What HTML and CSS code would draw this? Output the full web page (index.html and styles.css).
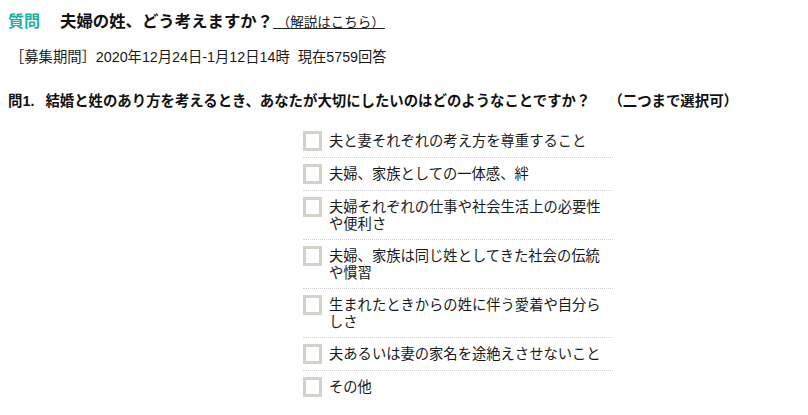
FILE: index.html
```html
<!DOCTYPE html>
<html lang="ja">
<head>
<meta charset="utf-8">
<title>夫婦の姓</title>
<link rel="stylesheet" href="styles.css">
</head>
<body>
<div class="page">
  <div class="header">
    <span class="label">質問</span>
    <span class="title">夫婦の姓、どう考えますか？</span>
    <a class="note" href="#"> （解説はこちら）</a>
  </div>
  <p class="period">［募集期間］2020年12月24日-1月12日14時&nbsp;&nbsp;現在5759回答</p>
  <p class="question"><span class="qno">問1.</span>結婚と姓のあり方を考えるとき、あなたが大切にしたいのはどのようなことですか？<span class="limit">（二つまで選択可）</span></p>
  <ul class="choices">
    <li class="choice"><span class="box"></span><span class="text">夫と妻それぞれの考え方を尊重すること</span></li>
    <li class="choice"><span class="box"></span><span class="text">夫婦、家族としての一体感、絆</span></li>
    <li class="choice"><span class="box"></span><span class="text">夫婦それぞれの仕事や社会生活上の必要性や便利さ</span></li>
    <li class="choice"><span class="box"></span><span class="text">夫婦、家族は同じ姓としてきた社会の伝統や慣習</span></li>
    <li class="choice"><span class="box"></span><span class="text">生まれたときからの姓に伴う愛着や自分らしさ</span></li>
    <li class="choice"><span class="box"></span><span class="text">夫あるいは妻の家名を途絶えさせないこと</span></li>
    <li class="choice"><span class="box"></span><span class="text">その他</span></li>
  </ul>
</div>
</body>
</html>
```

FILE: styles.css
```css
* { box-sizing: border-box; }
html, body { margin: 0; padding: 0; background: #fff; }
body {
  font-family: "Liberation Sans", "Noto Sans CJK JP", sans-serif;
  color: #1a1a1a;
}
.page { padding: 9px 8px 0 8px; }

.header {
  display: flex;
  align-items: baseline;
  height: 24px;
  line-height: 24px;
}
.label {
  font-size: 16px;
  font-weight: bold;
  color: #18b2a2;
  margin-right: 20px;
}
.title {
  font-size: 16.4px;
  font-weight: bold;
  color: #111;
}
.note {
  font-size: 13.5px;
  color: #222;
  text-decoration: underline;
  white-space: pre;
}

.period {
  margin: 14px 0 0 2px;
  font-size: 14.3px;
  line-height: 20px;
  color: #1a1a1a;
}
.question {
  margin: 24px 0 0 0;
  font-size: 14.4px;
  line-height: 20px;
  font-weight: bold;
  color: #111;
}
.qno { margin-right: 11px; }
.limit { margin-left: 18px; }

.choices {
  list-style: none;
  margin: 14px 0 0 295px;
  padding: 0;
  width: 310px;
}
.choice {
  display: flex;
  align-items: flex-start;
  gap: 7px;
  padding: 6px 0 6px 0;
  border-bottom: 1px dotted #cfcfcf;
}
.choice:last-child { border-bottom: none; }
.box {
  flex: none;
  width: 19px;
  height: 20px;
  border: 3px solid #d2d2ca;
  background: #fff;
}
.text {
  font-size: 14.3px;
  line-height: 17px;
  padding-top: 2px;
  color: #1a1a1a;
}
```
